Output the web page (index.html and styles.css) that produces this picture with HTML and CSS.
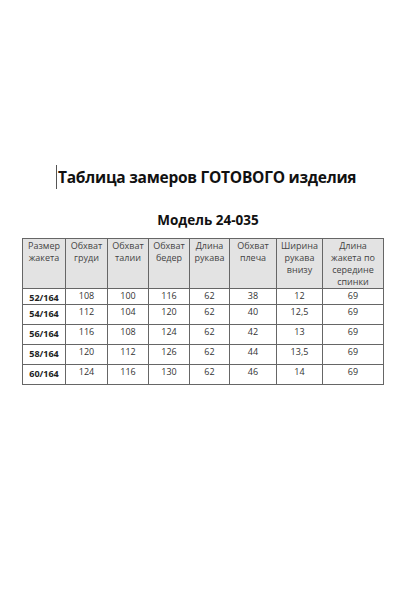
FILE: index.html
```html
<!DOCTYPE html>
<html lang="ru">
<head>
<meta charset="utf-8">
<link rel="stylesheet" href="styles.css">
</head>
<body>
<div class="page">
  <h1 class="title"><span class="cursor"></span>Таблица замеров ГОТОВОГО изделия</h1>
  <h2 class="model">Модель 24-035</h2>
  <table class="sizes">
    <colgroup>
      <col class="c1"><col class="c2"><col class="c3"><col class="c4"><col class="c5"><col class="c6"><col class="c7"><col class="c8">
    </colgroup>
    <thead>
      <tr>
        <th>Размер<br>жакета</th>
        <th>Обхват<br>груди</th>
        <th>Обхват<br>талии</th>
        <th>Обхват<br>бедер</th>
        <th>Длина<br>рукава</th>
        <th>Обхват<br>плеча</th>
        <th>Ширина<br>рукава<br>внизу</th>
        <th>Длина<br>жакета по<br>середине<br>спинки</th>
      </tr>
    </thead>
    <tbody>
      <tr class="first"><td class="size">52/164</td><td>108</td><td>100</td><td>116</td><td>62</td><td>38</td><td>12</td><td>69</td></tr>
      <tr><td class="size">54/164</td><td>112</td><td>104</td><td>120</td><td>62</td><td>40</td><td>12,5</td><td>69</td></tr>
      <tr><td class="size">56/164</td><td>116</td><td>108</td><td>124</td><td>62</td><td>42</td><td>13</td><td>69</td></tr>
      <tr><td class="size">58/164</td><td>120</td><td>112</td><td>126</td><td>62</td><td>44</td><td>13,5</td><td>69</td></tr>
      <tr><td class="size">60/164</td><td>124</td><td>116</td><td>130</td><td>62</td><td>46</td><td>14</td><td>69</td></tr>
    </tbody>
  </table>
</div>
</body>
</html>
```
FILE: styles.css
```css
html, body {
  margin: 0;
  padding: 0;
  background: #ffffff;
}
.page {
  width: 400px;
  height: 600px;
  font-family: "Open Sans", "Liberation Sans", sans-serif;
  color: #111;
  padding-top: 164px;
  box-sizing: border-box;
}
.title {
  margin: 0 0 0 56px;
  font-size: 15.5px;
  font-weight: 700;
  line-height: 26px;
  letter-spacing: -0.25px;
  display: flex;
  align-items: center;
  white-space: nowrap;
}
.cursor {
  display: inline-block;
  width: 1px;
  height: 24px;
  background: #555;
  margin-right: 1px;
}
.model {
  margin: 20px 0 0 0;
  text-align: center;
  font-size: 13.5px;
  font-weight: 700;
  line-height: 20px;
  padding-left: 16px;
}
.sizes {
  margin: 8px 0 0 22px;
  border-collapse: collapse;
  table-layout: fixed;
  width: 361px;
  font-family: "Open Sans", "Liberation Sans", sans-serif;
  font-size: 9px;
  color: #333;
  border: 1.5px solid #666;
}
.c1 { width: 43px; }
.c2 { width: 42px; }
.c3 { width: 41px; }
.c4 { width: 41px; }
.c5 { width: 40px; }
.c6 { width: 47px; }
.c7 { width: 46px; }
.c8 { width: 61px; }
.sizes th, .sizes td {
  border: 1px solid #666;
  text-align: center;
  padding: 0;
  box-sizing: border-box;
}
.sizes thead tr { height: 49px; }
.sizes tbody tr { height: 20px; }
.sizes tbody tr.first { height: 16px; }
.sizes th {
  background: #e3e3e3;
  font-weight: 400;
  color: #444;
  vertical-align: top;
  line-height: 12px;
  padding-top: 1px;
}
.sizes td {
  vertical-align: top;
  line-height: 12px;
  padding-top: 1px;
}
.sizes td.size {
  font-weight: 700;
  color: #222;
  padding-top: 3px;
}
```
